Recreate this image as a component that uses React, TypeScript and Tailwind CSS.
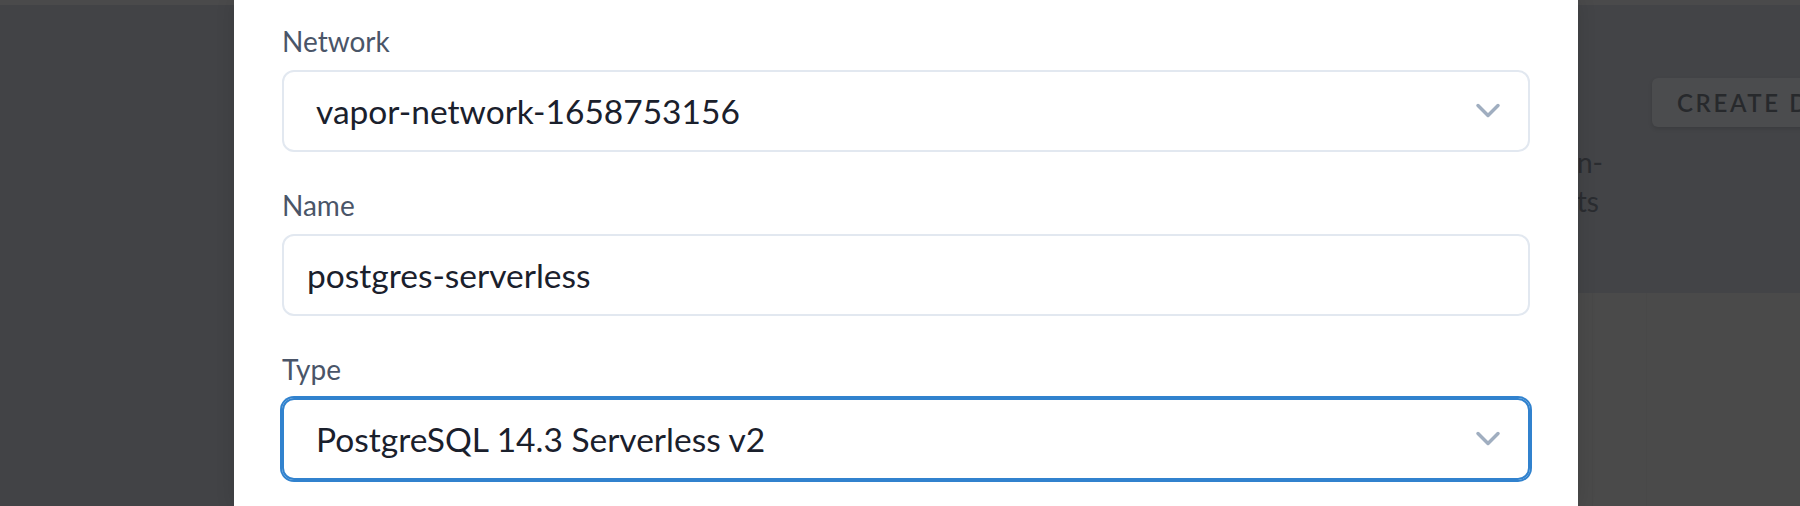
import React from 'react';

const Chevron = () => (
  <svg
    width="26"
    height="16"
    viewBox="0 0 26 16"
    fill="none"
    stroke="#a0aec0"
    strokeWidth="3.5"
    strokeLinecap="round"
    strokeLinejoin="round"
  >
    <path d="M3 2.5l10 10 10-10" />
  </svg>
);

interface FieldProps {
  label: string;
  value: string;
  select?: boolean;
  focused?: boolean;
}

const Field = ({ label, value, select, focused }: FieldProps) => (
  <div>
    <div className="text-[28px] leading-[36px] text-[#4a5568]">{label}</div>
    <div
      className={`mt-[11px] flex h-[82px] items-center justify-between rounded-[12px] border-2 ${
        focused
          ? 'border-[#3182ce] shadow-[0_0_0_2px_#3182ce]'
          : 'border-[#e2e8f0]'
      } ${select ? 'pl-[32px] pr-[27px]' : 'pl-[23px] pr-[27px]'}`}
    >
      <span className="text-[33.5px] text-[#1a202c]">{value}</span>
      {select && <Chevron />}
    </div>
  </div>
);

export default function App() {
  return (
    <div className="relative h-[506px] w-full overflow-hidden bg-[#4a4a4a] font-['Lato',sans-serif]">
      <div className="h-[5px] bg-[#4a4a4b]" />
      <div className="flex">
        <div className="h-[501px] w-[900px] shrink-0 bg-[#424346]" />
        <div className="min-w-0 flex-1 overflow-hidden">
          <div className="flex h-[288px] bg-[#434447]">
            <div className="mt-[138px] w-[703px] shrink-0 text-right text-[28px] leading-[39px] text-[#2a2c30]">
              <div>ction-</div>
              <div className="pr-[4px]">ents</div>
            </div>
            <div className="ml-[49px] mt-[73px] h-[49px] shrink-0 whitespace-nowrap rounded-[6px] bg-[#4b4c4e] pl-[25px] pr-[25px] text-[24px] font-semibold leading-[49px] tracking-[0.11em] text-[#27292c] shadow-[0_2px_4px_rgba(0,0,0,0.12)]">
              CREATE DATABASE
            </div>
          </div>
          <div className="flex h-[213px]">
            <div className="w-[693px] shrink-0 border-r border-[#484848]" />
            <div className="w-[54px] shrink-0 border-r border-[#484848]" />
          </div>
        </div>
      </div>

      <div className="absolute inset-y-0 left-[234px] w-[1344px] bg-white px-[48px] pt-[23px] shadow-[0_0_18px_rgba(0,0,0,0.12)]">
        <div className="flex flex-col gap-[35px]">
          <Field label="Network" value="vapor-network-1658753156" select />
          <Field label="Name" value="postgres-serverless" />
          <Field
            label="Type"
            value="PostgreSQL 14.3 Serverless v2"
            select
            focused
          />
        </div>
      </div>
    </div>
  );
}
